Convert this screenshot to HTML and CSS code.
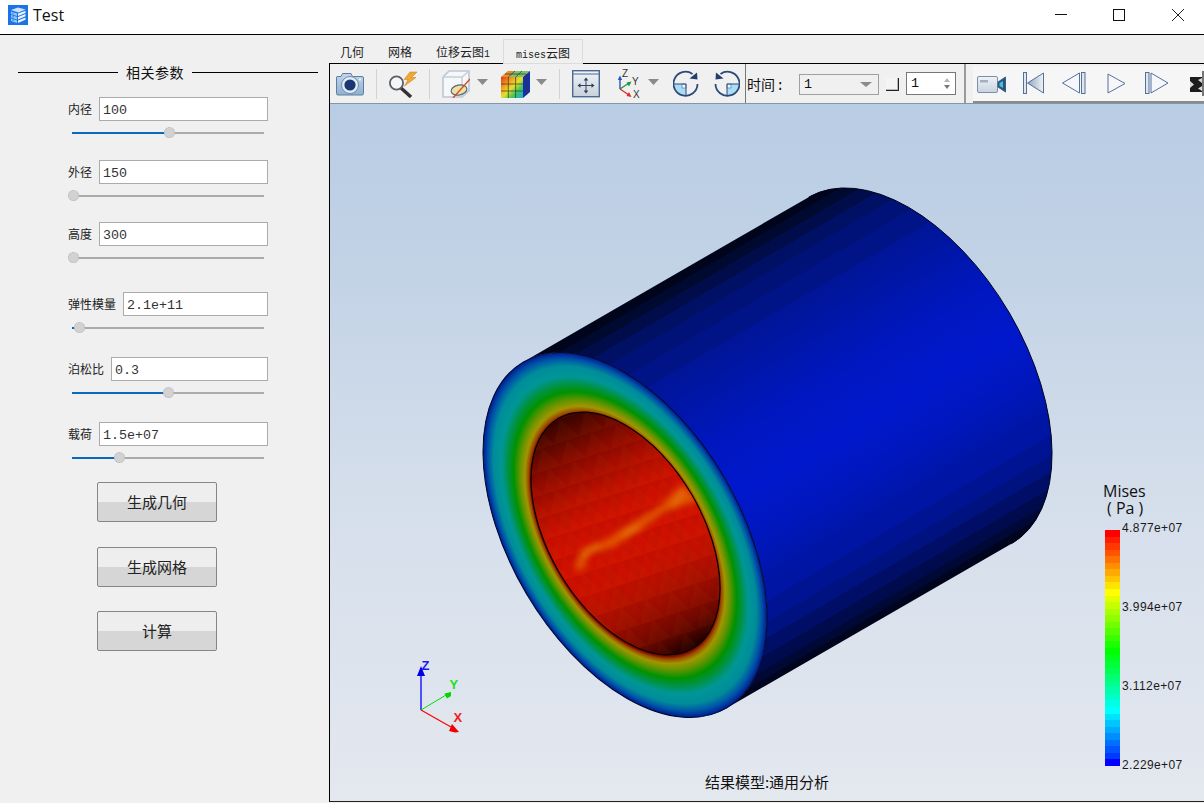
FILE: index.html
```html
<!DOCTYPE html>
<html lang="zh">
<head>
<meta charset="utf-8">
<title>Test</title>
<link rel="stylesheet" href="styles.css">
</head>
<body>
<div class="app">
  <header class="titlebar">
    <svg class="app-icon" viewBox="0 0 20 20" width="20" height="20">
      <rect width="20" height="20" fill="#1a74e6"/>
      <path d="M3 5 L10 2.5 L17.5 4.5 L10.5 7.5Z" fill="#cfe3fb"/>
      <path d="M3 6.5 L9 8.5 V11 L3 9Z M3 10 L9 12 V14.5 L3 12.5Z M3 13.5 L9 15.5 V18 L3 16Z" fill="#9cc6f7"/>
      <path d="M5 7.6 V9.2 M5 11 V12.6 M5 14.4 V16" stroke="#1a74e6" stroke-width="1"/>
      <path d="M10 8.5 L17.5 5.8 V8 L10 11Z M10 12 L17.5 9 V11.3 L10 14.4Z M10 15.5 L17.5 12.5 V14.8 L10 18Z" fill="#eaf3fe"/>
    </svg>
    <span class="app-title">Test</span>
    <div class="win-controls">
      <svg viewBox="0 0 12 12" width="12" height="12"><path d="M0 5.5H12" class="win-line"/></svg>
      <svg viewBox="0 0 12 12" width="12" height="12"><rect x="0.5" y="0.5" width="11" height="11" class="win-line win-none"/></svg>
      <svg class="win-close" viewBox="0 0 12 12" width="12" height="12"><path d="M0 0L12 12M12 0L0 12" class="win-line win-thin"/></svg>
    </div>
  </header>

  <div class="workspace">
    <aside class="sidebar">
      <div class="section-head"><span class="rule rule-left"></span><span class="section-name">相关参数</span><span class="rule rule-right"></span></div>

      <div class="param param-first">
        <div class="param-row"><label class="param-label">内径</label><input class="param-input" value="100"></div>
        <div class="slider"><span class="slider-fill" style="width:97px"></span><span class="slider-knob" style="left:92px"></span></div>
      </div>
      <div class="param param-26">
        <div class="param-row"><label class="param-label">外径</label><input class="param-input" value="150"></div>
        <div class="slider"><span class="slider-knob" style="left:-4px"></span></div>
      </div>
      <div class="param param-25">
        <div class="param-row"><label class="param-label">高度</label><input class="param-input" value="300"></div>
        <div class="slider"><span class="slider-knob" style="left:-4px"></span></div>
      </div>
      <div class="param param-33">
        <div class="param-row"><label class="param-label">弹性模量</label><input class="param-input" value="2.1e+11"></div>
        <div class="slider"><span class="slider-fill" style="width:7px"></span><span class="slider-knob" style="left:2px"></span></div>
      </div>
      <div class="param param-28">
        <div class="param-row"><label class="param-label">泊松比</label><input class="param-input" value="0.3"></div>
        <div class="slider"><span class="slider-fill" style="width:96px"></span><span class="slider-knob" style="left:91px"></span></div>
      </div>
      <div class="param param-28">
        <div class="param-row"><label class="param-label">载荷</label><input class="param-input" value="1.5e+07"></div>
        <div class="slider"><span class="slider-fill" style="width:47px"></span><span class="slider-knob" style="left:42px"></span></div>
      </div>

      <div class="actions">
        <button class="action">生成几何</button>
        <button class="action">生成网格</button>
        <button class="action action-last">计算</button>
      </div>
    </aside>

    <main class="content">
      <nav class="tabs">
        <span class="tab">几何</span>
        <span class="tab">网格</span>
        <span class="tab">位移云图<span class="mono">1</span></span>
        <span class="tab tab-active"><span class="mono">mises</span>云图</span>
      </nav>

      <section class="viewer">
        <div class="toolbar">
          <svg class="tool m6" viewBox="336 69 28 29" width="28" height="29">
            <defs><linearGradient id="camBody" x1="0" y1="0" x2="0" y2="1"><stop offset="0" stop-color="#c4d6e9"/><stop offset="1" stop-color="#8fb0d0"/></linearGradient></defs>
            <path d="M337 76.5 H341 L342.5 73.5 H351 L352.5 76.5 H362 Q363.5 76.5 363.5 78 V93.5 Q363.5 95 362 95 H338 Q336.5 95 336.5 93.5 V78 Q336.5 76.5 337 76.5Z" fill="url(#camBody)" stroke="#5d7ea3"/>
            <circle cx="350" cy="85" r="8.5" fill="#e4edf6" stroke="#6d8cae"/>
            <circle cx="350" cy="85" r="5.6" fill="#1b3670"/>
            <circle cx="360" cy="79.5" r="1" fill="#fff"/>
          </svg>
          <span class="sep"></span>
          <svg class="tool" viewBox="389 69 28 29" width="28" height="29">
            <path d="M401 88 L411 97" stroke="#333" stroke-width="3.4"/>
            <circle cx="396.5" cy="83" r="6.6" fill="#f4f6f8" stroke="#5a5f66" stroke-width="1.8"/>
            <path d="M410 72 L404 79.5 H408 L404.5 86 L416 77.5 H411.5 L417 72Z" fill="#f2a633" stroke="#c47a18" stroke-width=".5"/>
          </svg>
          <span class="sep"></span>
          <svg class="tool" viewBox="442 69 28 29" width="28" height="29">
            <path d="M443 77 L449 71 H469 V91 L462 97 H443Z" fill="#f6f7f9" stroke="#bcc6d2" stroke-width="1.6"/>
            <path d="M443 77 H462 L469 71 M462 77 V97" fill="none" stroke="#c6ced8" stroke-width="1.4"/>
            <ellipse cx="459" cy="90" rx="8" ry="5" fill="#efe0a4" stroke="#56677e" stroke-width="1.2" transform="rotate(-12 459 90)"/>
            <path d="M453 98 L470 79" stroke="#cf4a25" stroke-width="1.3"/>
          </svg>
          <svg class="tool-arrow m7" viewBox="0 0 11 6" width="11" height="6"><path d="M0 0H11L5.500 6Z"/></svg>
          <svg class="tool m13" viewBox="501 69 30 29" width="30" height="29">
            <defs><linearGradient id="cubeFront" x1="0" y1="0" x2="1" y2="1"><stop offset="0" stop-color="#e8321c"/><stop offset=".3" stop-color="#f4a21c"/><stop offset=".5" stop-color="#e6e02a"/><stop offset=".72" stop-color="#3ec85a"/><stop offset="1" stop-color="#1fa8e0"/></linearGradient></defs>
            <path d="M501 77 L508 71 H530 L523 77Z" fill="#7cc46a"/>
            <path d="M508 71 H515 L508 77 H501Z" fill="#e8902a"/>
            <path d="M523 77 L530 71 V92 L523 98Z" fill="#1530a8"/>
            <rect x="501" y="77" width="22" height="21" fill="url(#cubeFront)"/>
            <path d="M508.300 77V98 M515.600 77V98 M501 84H523 M501 91H523 M515 71 L508.300 77 M522 71 L515.600 77 M505 74 H526 M526.500 74 V95" stroke="#333" stroke-width=".7" fill="none"/>
          </svg>
          <svg class="tool-arrow m5" viewBox="0 0 11 6" width="11" height="6"><path d="M0 0H11L5.500 6Z"/></svg>
          <span class="sep"></span>
          <svg class="tool" viewBox="572 69 28 29" width="28" height="29">
            <defs><linearGradient id="fitBg" x1="0" y1="0" x2="0" y2="1"><stop offset="0" stop-color="#f1f4f8"/><stop offset="1" stop-color="#c8d0dc"/></linearGradient></defs>
            <rect x="572.700" y="70.700" width="26.600" height="26" fill="url(#fitBg)" stroke="#4a6a91" stroke-width="1.4"/>
            <path d="M573 74H599" stroke="#4a6a91"/>
            <path d="M586 79V92 M579.500 85.500H592.500" stroke="#34465f"/>
            <path d="M586 77.500 L583.700 80.500H588.300Z M586 93.500 L583.700 90.500H588.300Z M577.500 85.500 L580.500 83.200V87.800Z M594.500 85.500 L591.500 83.200V87.800Z" fill="#2a3c55"/>
          </svg>
          <svg class="tool m18" viewBox="618 69 26 29" width="26" height="29">
            <path d="M620 89V78" stroke="#1f55c4" stroke-width="1.4"/>
            <path d="M620 75.500 L617.800 80H622.200Z" fill="#1f55c4"/>
            <path d="M620 89 L629 83" stroke="#1c9a3c" stroke-width="1.4"/>
            <path d="M631.500 81.500 L626.500 82.500 L629 86.500Z" fill="#1c9a3c"/>
            <path d="M620 89 L629 95" stroke="#e02c2c" stroke-width="1.4"/>
            <path d="M631.500 97 L626.500 96 L629 92Z" fill="#e02c2c"/>
            <text x="622" y="77" class="axis-mini">Z</text>
            <text x="632" y="85" class="axis-mini">Y</text>
            <text x="633" y="97.500" class="axis-mini">X</text>
          </svg>
          <svg class="tool-arrow m4" viewBox="0 0 11 6" width="11" height="6"><path d="M0 0H11L5.500 6Z"/></svg>
          <svg class="tool m14" viewBox="673 69 26 29" width="26" height="29">
            <path d="M674.500 84 H686 V95.500 A12 12 0 0 1 674.500 84Z" fill="#a9dcf5"/>
            <rect x="682" y="84" width="4" height="4" fill="#e9f6fd" stroke="#3c6fa8" stroke-width=".6"/>
            <path d="M692.500 74 A12 12 0 1 0 697.500 84" fill="none" stroke="#2c4a78" stroke-width="1.8"/>
            <path d="M674 84H686V96" fill="none" stroke="#2c4a78"/>
            <path d="M697 72.500 L697.500 79.500 L689.500 78.500Z" fill="#22406e"/>
          </svg>
          <svg class="tool m15" viewBox="714 69 26 29" width="26" height="29">
            <path d="M738.500 84 H727 V95.500 A12 12 0 0 0 738.500 84Z" fill="#a9dcf5"/>
            <rect x="727" y="84" width="4" height="4" fill="#e9f6fd" stroke="#3c6fa8" stroke-width=".6"/>
            <path d="M720.500 74 A12 12 0 1 1 715.500 84" fill="none" stroke="#2c4a78" stroke-width="1.8"/>
            <path d="M739 84H727V96" fill="none" stroke="#2c4a78"/>
            <path d="M716 72.500 L715.500 79.500 L723.500 78.500Z" fill="#22406e"/>
          </svg>
          <span class="sep-dark m5"></span>
          <span class="time-label">时间<span class="time-colon">:</span></span>
          <div class="combo"><span>1</span><i class="combo-arrow"></i></div>
          <span class="checkish"></span>
          <div class="spin"><span>1</span><span class="spin-arrows"><i class="up"></i><i class="down"></i></span></div>
          <span class="sep-gray"></span>
          <div class="media">
            <svg class="media-cam" viewBox="977 72 30 25" width="30" height="25">
              <defs><linearGradient id="camFill" x1="0" y1="0" x2="0" y2="1"><stop offset="0" stop-color="#f0f3f7"/><stop offset="1" stop-color="#c9d2de"/></linearGradient></defs>
              <rect x="977.500" y="77.500" width="20" height="16" rx="1.500" fill="url(#camFill)" stroke="#7a90a8"/>
              <rect x="980" y="81" width="8" height="2.500" fill="#a4b0c0"/>
              <path d="M998 83 L1005.500 78V93 L998 88Z" fill="#24557f" stroke="#3c5f88"/>
              <path d="M999.500 84 L1003 82V89 L999.500 87Z" fill="#49bfd6"/>
            </svg>
            <svg class="media-first" viewBox="1023 72 22 25" width="22" height="25">
              <defs><linearGradient id="fadeFill" x1="0" y1="0" x2="1" y2="0"><stop offset="0" stop-color="#8fa5be"/><stop offset="1" stop-color="#f0f3f7"/></linearGradient></defs>
              <rect x="1023.500" y="73.500" width="3" height="21" fill="#dfe6ef" stroke="#54719a"/>
              <path d="M1043.500 74 L1027.500 84 L1043.500 94Z" fill="url(#fadeFill)" stroke="#54719a"/>
            </svg>
            <svg class="media-prev" viewBox="1062 72 24 25" width="24" height="25">
              <path d="M1079.500 74 L1062.500 84 L1079.500 94Z" fill="#f5f7fa" stroke="#54719a"/>
              <rect x="1081.500" y="73.500" width="3.500" height="21" fill="#dfe6ef" stroke="#54719a"/>
            </svg>
            <svg class="media-play" viewBox="1107 72 19 25" width="19" height="25">
              <path d="M1108 75 L1125 84.500 L1108 94Z" fill="#f5f7fa" stroke="#54719a"/>
            </svg>
            <svg class="media-next" viewBox="1145 72 24 25" width="24" height="25">
              <rect x="1145.500" y="73.500" width="3.500" height="21" fill="#dfe6ef" stroke="#54719a"/>
              <path d="M1151 74 L1168 84 L1151 94Z" fill="#f5f7fa" stroke="#54719a"/>
            </svg>
            <svg class="media-more" viewBox="1190 72 14 25" width="14" height="25">
              <rect x="1190" y="78" width="12" height="15" fill="#1c1c1c"/>
              <path d="M1190 82 L1194 85.500 L1190 89Z M1202 79 L1198 81 L1202 84Z M1202 87 L1198 89.500 L1202 92Z" fill="#d8d8d8"/>
              <rect x="1202" y="72" width="2" height="25" fill="#777"/>
            </svg>
          </div>
        </div>

        <div class="viewport">
          <svg class="scene" viewBox="330 104 874 697" width="874" height="697">
            <defs>
              <linearGradient id="body" gradientUnits="userSpaceOnUse" x1="523.600" y1="361.700" x2="726.400" y2="708.300">
                <stop offset="0" stop-color="#00051c"/><stop offset=".025" stop-color="#00051c"/>
                <stop offset=".025" stop-color="#000930"/><stop offset=".05" stop-color="#000930"/>
                <stop offset=".05" stop-color="#000d4a"/><stop offset=".08" stop-color="#000d4a"/>
                <stop offset=".08" stop-color="#001064"/><stop offset=".115" stop-color="#001064"/>
                <stop offset=".115" stop-color="#001278"/><stop offset=".16" stop-color="#001278"/>
                <stop offset=".16" stop-color="#001488"/><stop offset=".21" stop-color="#001488"/>
                <stop offset=".21" stop-color="#001596"/>
                <stop offset=".30" stop-color="#0016a8"/>
                <stop offset=".42" stop-color="#0017c0"/>
                <stop offset=".56" stop-color="#0018cc"/>
                <stop offset=".68" stop-color="#0017bc"/>
                <stop offset=".78" stop-color="#0015a4"/><stop offset=".82" stop-color="#0015a4"/>
                <stop offset=".82" stop-color="#001392"/><stop offset=".865" stop-color="#001392"/>
                <stop offset=".865" stop-color="#001180"/><stop offset=".90" stop-color="#001180"/>
                <stop offset=".90" stop-color="#000e68"/><stop offset=".935" stop-color="#000e68"/>
                <stop offset=".935" stop-color="#000b4e"/><stop offset=".965" stop-color="#000b4e"/>
                <stop offset=".965" stop-color="#000836"/><stop offset=".985" stop-color="#000836"/>
                <stop offset=".985" stop-color="#00041c"/><stop offset="1" stop-color="#00041c"/>
              </linearGradient>
              <radialGradient id="ring">
                <stop offset=".665" stop-color="#7a0c00"/>
                <stop offset=".68" stop-color="#9c4a00"/>
                <stop offset=".705" stop-color="#a09600"/>
                <stop offset=".735" stop-color="#6e9400"/>
                <stop offset=".785" stop-color="#009200"/>
                <stop offset=".825" stop-color="#009244"/>
                <stop offset=".87" stop-color="#009696"/>
                <stop offset=".925" stop-color="#008c9a"/>
                <stop offset=".965" stop-color="#0054a8"/>
                <stop offset="1" stop-color="#001a90"/>
              </radialGradient>
              <linearGradient id="bore" gradientUnits="userSpaceOnUse" x1="552" y1="412" x2="680" y2="655">
                <stop offset="0" stop-color="#240000"/><stop offset=".06" stop-color="#440500"/>
                <stop offset=".12" stop-color="#640800"/><stop offset=".18" stop-color="#840a00"/>
                <stop offset=".25" stop-color="#a00c00"/><stop offset=".33" stop-color="#ba1000"/>
                <stop offset=".42" stop-color="#cc1000"/><stop offset=".55" stop-color="#d01000"/>
                <stop offset=".66" stop-color="#c81000"/><stop offset=".74" stop-color="#b41000"/>
                <stop offset=".80" stop-color="#a00e00"/><stop offset=".86" stop-color="#860a00"/>
                <stop offset=".91" stop-color="#6c0800"/><stop offset=".95" stop-color="#4a0400"/>
                <stop offset="1" stop-color="#1a0000"/>
              </linearGradient>
              <pattern id="mesh" width="26" height="22" patternUnits="userSpaceOnUse" patternTransform="rotate(-18)">
                <path d="M0 22 L13 0 L26 22Z" fill="#ff5a00" fill-opacity=".05"/>
                <path d="M0 0 H26 L13 22Z" fill="#400000" fill-opacity=".05"/>
              </pattern>
              <clipPath id="boreClip"><ellipse cx="0" cy="0" rx="133.300" ry="76.900" transform="translate(625.500 533.500) rotate(59.700)"/></clipPath>
              <filter id="soft" x="-20%" y="-40%" width="140%" height="180%"><feGaussianBlur stdDeviation="3"/></filter>
            </defs>

            <path d="M523.600 361.700 L808.600 197.200 A200.700 114.800 59.500 0 1 1011.400 543.800 L726.400 708.300 A200.700 114.800 59.500 0 0 523.600 361.700Z" fill="url(#body)"/>
            <path d="M808.600 197.200 A200.700 114.800 59.500 0 1 1011.400 543.800" fill="none" stroke="#00021a" stroke-width="1"/>
            <ellipse cx="0" cy="0" rx="200.700" ry="114.800" transform="translate(625 535) rotate(59.500)" fill="url(#ring)" stroke="#00052a" stroke-width="1"/>

            <g clip-path="url(#boreClip)">
              <rect x="520" y="400" width="210" height="265" fill="url(#bore)"/>
              <rect x="520" y="400" width="210" height="265" fill="url(#mesh)"/>
              <path d="M574 566 L584 548 L606 540 L624 528 L640 518 L660 506 L682 484 L700 500 L664 512 L640 530 L612 548 L590 552 L582 572Z" fill="#e05206" filter="url(#soft)"/>
              <path d="M581 556 L600 546 M622 535 L640 526 M672 506 L684 492" fill="none" stroke="#e88a12" stroke-width="4" opacity=".6" filter="url(#soft)"/>
            </g>
            <ellipse cx="0" cy="0" rx="133.300" ry="76.900" transform="translate(625.500 533.500) rotate(59.700)" fill="none" stroke="#0a0000" stroke-width="1.200"/>

            <path d="M421 710V675" stroke="#0000ff" stroke-width="1.300"/>
            <path d="M421 666 L417 676H425Z" fill="#0000e6"/>
            <path d="M421 710 L446 695" stroke="#00e000" stroke-width="1"/>
            <path d="M451 692 L444.500 693.500 L447 698.500 L451 696Z" fill="#00d800"/>
            <path d="M421 710 L451 727" stroke="#ff0000" stroke-width="1.200"/>
            <path d="M459 732 L452 724 L449 731 L455 732.500Z" fill="#f00000"/>
            <text x="421.500" y="669.500" class="axis-label axis-z">Z</text>
            <text x="449.500" y="689" class="axis-label axis-y">Y</text>
            <text x="453.500" y="722" class="axis-label axis-x">X</text>
          </svg>

          <div class="legend">
            <div class="legend-title">Mises<span class="legend-unit">( Pa )</span></div>
            <div class="legend-body">
              <div class="legend-bar"></div>
              <div class="legend-values">
                <span>4.877e+07</span><span>3.994e+07</span><span>3.112e+07</span><span>2.229e+07</span>
              </div>
            </div>
          </div>
          <div class="caption">结果模型:通用分析</div>
        </div>
      </section>
    </main>
  </div>
</div>
</body>
</html>
```

FILE: styles.css
```css
* { box-sizing: border-box; }
html, body { margin: 0; height: 100%; overflow: hidden; }
body {
  background: #f0f0f0;
  color: #111;
  font-family: "Noto Sans CJK SC", "Open Sans", sans-serif;
  font-size: 12px;
}
.app { display: flex; flex-direction: column; width: 1204px; height: 803px; }

/* title bar */
.titlebar {
  display: flex;
  align-items: flex-start;
  flex: none;
  height: 35px;
  padding: 5px 20px 0 8px;
  background: #fff;
  border-bottom: 1px solid #000;
}
.app-icon { flex: none; }
.app-title { margin-left: 5px; font: 16px/20px "Open Sans", sans-serif; color: #111; }
.win-controls { display: flex; gap: 46px; margin: 4px 0 0 auto; }
.win-close { margin-left: 1px; }
.win-line { fill: none; stroke: #111; stroke-width: 1; }
.win-thin { stroke: #222; stroke-width: 1; }

/* sidebar */
.workspace { display: flex; flex: 1; min-height: 0; }
.sidebar { flex: none; width: 328px; padding: 27px 0 0 18px; }
.section-head { display: flex; align-items: center; width: 300px; height: 20px; }
.rule { height: 1px; background: #000; }
.rule-left { width: 100px; }
.rule-right { flex: 1; }
.section-name { width: 74px; padding: 0 8px; font-size: 14px; line-height: 20px; white-space: nowrap; color: #111; letter-spacing: .5px; }

.param { width: 200px; margin-left: 50px; }
.param-first { margin-top: 15px; }
.param-26 { margin-top: 26px; }
.param-25 { margin-top: 25px; }
.param-33 { margin-top: 33px; }
.param-28 { margin-top: 28px; }
.param-row { display: flex; align-items: center; gap: 7px; height: 24px; }
.param-label { flex: none; font-size: 12px; line-height: 24px; color: #222; }
.param-input {
  flex: 1;
  min-width: 0;
  height: 24px;
  padding: 2px 3px 0;
  border: 1px solid #ababab;
  border-radius: 0;
  background: #fff;
  color: #333;
  font: 13.33px "Liberation Mono", monospace;
  outline: none;
}
.slider { position: relative; width: 192px; height: 2px; margin: 11px 0 0 4px; background: #ababab; }
.slider-fill { display: block; height: 2px; background: #0a68bd; }
.slider-knob {
  position: absolute;
  top: -5px;
  width: 11px;
  height: 11px;
  border: 1px dotted #b4b4b4;
  border-radius: 50%;
  background: #d2d2d2;
}

.actions { display: flex; flex-direction: column; gap: 25px; width: 120px; margin: 23px 0 0 79px; }
.action {
  height: 40px;
  padding: 0 0 2px;
  border: 1px solid #868686;
  border-radius: 2px;
  background: linear-gradient(#eeeeee 0, #eeeeee 50%, #d6d6d6 50%, #d6d6d6 100%);
  color: #222;
  font: 15px "Noto Sans CJK SC", sans-serif;
}
.action-last { margin-top: -1px; }

/* tabs */
.content { display: flex; flex: 1; flex-direction: column; min-width: 0; }
.tabs { display: flex; align-items: flex-end; flex: none; height: 28px; }
.tab { height: 24px; padding: 0 12px; line-height: 26px; font-size: 12px; color: #222; white-space: nowrap; }
.tab-active {
  position: relative;
  z-index: 1;
  height: 25px;
  margin-bottom: -1px;
  margin-left: 1px;
  padding: 0 12px;
  background: #f0f0f0;
  border: 1px solid #dcdcdc;
  line-height: 25px;
}
.mono { font: 10px "Liberation Mono", monospace; }

/* viewer */
.viewer {
  display: flex;
  flex-direction: column;
  flex: 1;
  min-height: 0;
  margin: 0 0 1px 1px;
  border-top: 1px solid #000;
  border-left: 1px solid #000;
  border-bottom: 1px solid #222;
}
.toolbar {
  display: flex;
  align-items: center;
  flex: none;
  height: 40px;
  background: #f0f0f0;
  border-bottom: 1px solid #8595a8;
}
.tool, .tool-arrow, .sep { flex: none; margin-left: 12px; }
.tool-arrow { fill: #8a8a8a; margin-top: -3px; }
.sep { width: 1px; height: 30px; background: #d2d2d2; }
.toolbar .m4 { margin-left: 4px; }
.toolbar .m5 { margin-left: 5px; }
.toolbar .m6 { margin-left: 6px; }
.toolbar .m7 { margin-left: 7px; }
.toolbar .m13 { margin-left: 13px; }
.toolbar .m14 { margin-left: 14px; }
.toolbar .m15 { margin-left: 15px; }
.toolbar .m18 { margin-left: 18px; }
.axis-mini { font: 10px "Liberation Sans", sans-serif; fill: #333; }
.sep-dark { flex: none; align-self: stretch; width: 1px; background: #777; }
.time-label { flex: none; width: 38px; margin: 1px 0 0 1px; font-size: 14px; line-height: 20px; color: #111; white-space: nowrap; }
.time-colon { font: 14px "Liberation Mono", monospace; margin-left: 1px; }
.combo {
  display: flex;
  align-items: center;
  justify-content: space-between;
  flex: none;
  width: 80px;
  height: 21px;
  margin: 2px 0 0 14px;
  padding: 0 6px 0 4px;
  border: 1px solid #a0a0a0;
  font: 13.33px "Liberation Mono", monospace;
}
.combo-arrow { width: 0; height: 0; border: 6px solid transparent; border-top: 5px solid #8a8a8a; border-bottom: 0; }
.checkish {
  flex: none;
  width: 13px;
  height: 13px;
  margin: 2px 0 0 7px;
  background: #f4f4f4;
  border-right: 1px solid #222;
  border-bottom: 1px solid #222;
  box-shadow: inset -1px -1px 0 #b8b8b8;
}
.spin {
  display: flex;
  align-items: center;
  justify-content: space-between;
  flex: none;
  width: 50px;
  height: 23px;
  margin-left: 7px;
  padding: 0 5px 0 4px;
  background: #fff;
  border: 1px solid #777;
  font: 13.33px "Liberation Mono", monospace;
}
.spin-arrows { display: flex; flex-direction: column; gap: 3px; }
.spin-arrows i { display: block; width: 0; height: 0; border: 3.5px solid transparent; }
.spin-arrows .up { border-top: 0; border-bottom: 4px solid #b5b5b5; }
.spin-arrows .down { border-bottom: 0; border-top: 4px solid #777; }
.sep-gray { flex: none; align-self: stretch; width: 2px; margin-left: 8px; background: #9a9a9a; }
.media {
  display: flex;
  align-items: center;
  align-self: flex-end;
  flex: 1;
  min-width: 0;
  height: 37px;
  margin-left: 7px;
  padding-left: 4px;
  background: #f6f6f6;
  border-bottom: 2px solid #8a8a8a;
}
.media svg { flex: none; }
.media-first { margin-left: 16px; }
.media-prev { margin-left: 17px; }
.media-play { margin-left: 21px; }
.media-next { margin-left: 19px; }
.media-more { margin-left: 21px; }

.viewport {
  position: relative;
  flex: 1;
  min-height: 0;
  overflow: hidden;
  background: linear-gradient(#b8cce4 0, #c3d3e6 25%, #d4deeb 55%, #e4e8ef 100%);
}
.scene { position: absolute; top: 0; left: 0; display: block; }
.axis-label { font: 700 13px "Liberation Sans", sans-serif; }
.axis-z { fill: #1a1af0; }
.axis-y { fill: #22e022; }
.axis-x { fill: #f02020; }

.legend { position: absolute; left: 773px; top: 379px; width: 100px; color: #111; }
.legend-title { font: 16px/17px "Open Sans", sans-serif; }
.legend-unit { display: block; padding-left: 4px; }
.legend-body { display: flex; margin: 13px 0 0 2px; }
.legend-bar {
  flex: none;
  width: 15px;
  height: 236px;
  background: linear-gradient(to bottom,
    #ff0000 0 6.56px, #ff1c00 0 13.1px, #ff3900 0 19.7px, #ff5500 0 26.2px, #ff7100 0 32.8px,
    #ff8e00 0 39.3px, #ffaa00 0 45.9px, #ffc600 0 52.4px, #ffe300 0 59px,
    #ffff00 0 65.6px, #e3ff00 0 72.1px, #c6ff00 0 78.7px, #aaff00 0 85.2px, #8eff00 0 91.8px,
    #71ff00 0 98.3px, #55ff00 0 104.9px, #39ff00 0 111.4px, #1cff00 0 118px,
    #00ff00 0 124.6px, #00ff1c 0 131.1px, #00ff39 0 137.7px, #00ff55 0 144.2px, #00ff71 0 150.8px,
    #00ff8e 0 157.3px, #00ffaa 0 163.9px, #00ffc6 0 170.4px, #00ffe3 0 177px,
    #00ffff 0 183.6px, #00e3ff 0 190.1px, #00c6ff 0 196.7px, #00aaff 0 203.2px, #008eff 0 209.8px,
    #0071ff 0 216.3px, #0055ff 0 222.9px, #0039ff 0 229.4px, #0000ff 0 236px);
}
.legend-values {
  display: flex;
  flex-direction: column;
  justify-content: space-between;
  height: 251px;
  margin: -9px 0 0 2px;
  font: 12px/14px "Liberation Sans", sans-serif;
  letter-spacing: .4px;
  color: #1a1a1a;
}
.caption {
  position: absolute;
  left: 0;
  right: 0;
  bottom: 9px;
  text-align: center;
  font-size: 15px;
  line-height: 20px;
  color: #111;
}
```
